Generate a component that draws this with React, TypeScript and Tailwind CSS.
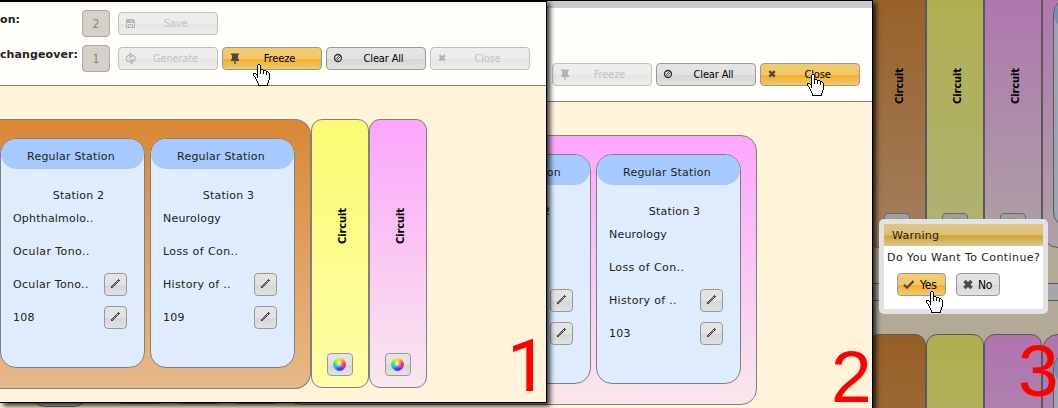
import React from 'react';

const verdana = "font-['DejaVu_Sans',sans-serif]";
const tahoma = "font-['DejaVu_Sans_Condensed','DejaVu_Sans',sans-serif] [font-stretch:condensed]";
const greyGlass = 'bg-[linear-gradient(#e4e4e4_0%,#e2e2e2_50%,#d6d6d6_52%,#e2e2e2_100%)]';
const goldGlass = 'bg-[linear-gradient(#f3cb70_0%,#f2c768_50%,#efb02a_54%,#f3c96c_100%)]';

type IconName = 'save' | 'refresh' | 'pin' | 'ban' | 'close' | 'check' | 'pencil' | 'bigClose';

function Icon({ name }: { name: IconName }) {
  const c = '#4a4a4a';
  return (
    <svg width="16" height="16" viewBox="0 0 16 16" className="block shrink-0" fill="none">
      {name === 'save' && (
        <g>
          <path d="M3.500 3.500h7l1 1v7h-8z" stroke={c} />
          <path d="M4 4h7v3H4z" fill={c} />
          <path d="M5.500 11.500v-3h4v3" stroke={c} />
          <path d="M8 4h1v2H8z" fill="#ddd" />
        </g>
      )}
      {name === 'refresh' && (
        <g stroke={c} strokeWidth="1.1">
          <path d="M7 4.5H5L3.5 6v3L5 10.5h1M9 4.5h1.5L12 6v3l-1.5 1.500H9" />
          <path d="M7 2.5v4l2.500-2zM9 8.500v4L6.500 10.500z" />
        </g>
      )}
      {name === 'pin' && (
        <path d="M4 2.500h8v1.500h-1v4h1v2H8.700v3H7.300v-3H4v-2h1V4H4z" fill={c} />
      )}
      {name === 'ban' && (
        <g stroke="#303030" strokeWidth="1.300">
          <circle cx="7" cy="7" r="3.500" />
          <path d="M4.300 8.700l4.300-4.300M5.500 9.600l4.200-4.200" strokeWidth=".8" />
        </g>
      )}
      {name === 'close' && <path d="M4.400 4.200l5.400 5.400M9.800 4.200l-5.400 5.400" stroke={c} strokeWidth="2.400" />}
      {name === 'bigClose' && <path d="M4.500 4l7 7M11.500 4l-7 7" stroke={c} strokeWidth="3.400" />}
      {name === 'check' && <path d="M3 7.700l3 3L12.500 4" stroke={c} strokeWidth="2.300" />}
      {name === 'pencil' && (
        <g shapeRendering="crispEdges" fill="#444">
          <path d="M3 10h2v1H3zM3 9h1v1H3zM4 8h1v1H4zM5 7h1v1H5zM6 6h1v1H6zM7 5h1v1H7zM5 9h1v1H5zM6 8h1v1H6zM7 7h1v1H7zM8 6h1v1H8z" />
          <path d="M8 4h1v1H8zM9 5h1v1H9zM9 3h3v1H9zM10 2h1v3h-1z" />
          <path d="M4 9h1v1H4zM5 8h1v1H5zM6 7h1v1H6zM7 6h1v1H7zM8 5h1v1H8z" fill="#999" />
        </g>
      )}
    </svg>
  );
}

function ToolButton({ icon, label, disabled, hot }: { icon: IconName; label: string; disabled?: boolean; hot?: boolean }) {
  return (
    <div
      className={`flex h-[23px] w-[100px] shrink-0 items-center rounded-[4px] border border-[#999] pl-1 ${hot ? goldGlass : greyGlass} ${disabled ? 'opacity-60' : ''}`}
    >
      <div className={disabled ? 'opacity-60' : ''}>
        <Icon name={icon} />
      </div>
      <span className={`flex-1 pr-[5px] text-center text-[11px] leading-[21px] tracking-[-0.15px] ${tahoma} ${disabled ? 'text-[#9a9a9a]' : 'text-black'}`}>{label}</span>
    </div>
  );
}

function NumberBox({ value }: { value: string }) {
  return (
    <div className={`flex h-[27px] w-7 shrink-0 items-center justify-center rounded-[4px] border border-[#aaa] bg-[#d5d0c8] text-[12px] text-[#858585] ${tahoma}`}>
      {value}
    </div>
  );
}

function EditButton() {
  return (
    <div className={`flex h-[23px] w-[23px] items-center rounded-[4px] border border-[#999] pl-[3px] ${greyGlass}`}>
      <Icon name="pencil" />
    </div>
  );
}

function Station({ title = 'Regular Station', name, rows }: { title?: string; name: string; rows: string[] }) {
  return (
    <div className={`h-[230px] w-[145px] shrink-0 overflow-hidden rounded-[16px] border border-[#808080] bg-[#dfebff] text-[11px] tracking-[0.2px] text-[#222] ${verdana}`}>
      <div className="h-[30px] rounded-[15px] bg-[#a6caff] pr-[3px] text-center leading-[35px]">{title}</div>
      <div className="mt-[18px] pl-[12px] text-center leading-[18px]">{name}</div>
      <div className="mt-[-1px] pr-[17px] pl-3">
        {rows.map((row, i) => (
          <div key={i} className="mt-[-3px] mb-[3px] flex h-[33px] items-center justify-between">
            <span className={`pt-px ${i === 1 ? 'tracking-[0.4px]' : i === 2 ? 'tracking-[0.32px]' : ''}`}>{row}</span>
            {i > 1 && <EditButton />}
          </div>
        ))}
      </div>
    </div>
  );
}

function ColorWheel() {
  return (
    <div className={`flex h-[23px] w-[26px] items-center justify-center rounded-[4px] border border-[#999] ${greyGlass}`}>
      <div className="mr-px h-[13px] w-[13px] rounded-full bg-[radial-gradient(circle,#ffffffbb_0%,#ffffff00_45%),conic-gradient(#ffe030,#ff9a30,#ff3050,#e020d0,#6020f0,#1a60e0,#20c0e0,#30e868,#b0f040,#ffe030)]" />
    </div>
  );
}

const tones = {
  orange: 'bg-[linear-gradient(#d98835,#e8b888)]',
  yellow: 'bg-[linear-gradient(#fbfb72,#fefea8)]',
  pink: 'bg-[linear-gradient(#fca6fc,#f8e8ec)]',
};

function Circuit({ tone, label }: { tone: keyof typeof tones; label?: string }) {
  return (
    <div className={`flex h-[269px] w-[58px] shrink-0 flex-col items-center rounded-[11px] border border-[#808080] ${tones[tone]}`}>
      <div className={`mt-[87px] ml-[6px] h-[38px] w-4 rotate-180 text-center text-[10px] leading-4 font-bold tracking-[-0.15px] text-black [writing-mode:vertical-rl] ${verdana}`}>
        {label}
      </div>
      <div className="mt-[108px] mr-px">
        <ColorWheel />
      </div>
    </div>
  );
}

const handRows = [
  '     XX          ',
  '    X..X         ',
  '    X..X         ',
  '    X..X         ',
  '    X..X         ',
  '    X..XXX       ',
  '    X..X..XXX    ',
  '    X..X..X..XX  ',
  '    X..X..X..X.X ',
  'XXX X..X..X..X..X',
  'X..XX........X..X',
  'X...X...........X',
  ' X..X...........X',
  '  X.X...........X',
  '  X.............X',
  '   X............X',
  '   X...........X ',
  '    X..........X ',
  '    X..........X ',
  '     X........X  ',
  '     X........X  ',
  '     XXXXXXXXXX  ',
];

function Hand({ className }: { className: string }) {
  return (
    <svg width="17" height="22" viewBox="0 0 17 22" shapeRendering="crispEdges" className={`absolute z-20 ${className}`}>
      {handRows.flatMap((row, y) =>
        row.split('').map((p, x) =>
          p === ' ' ? null : <rect key={`${x}-${y}`} x={x} y={y} width="1" height="1" fill={p === 'X' ? '#000' : '#fff'} />,
        ),
      )}
    </svg>
  );
}

function FirstWindow() {
  return (
    <section className="absolute top-0 left-0 h-[403px] w-[547px] overflow-hidden border-t-2 border-r border-b border-black bg-[#fff3d9] shadow-[3px_3px_5px_#000000cc]">
      <div className="flex h-[84px] flex-col border-b border-[#808080] bg-[#fffefa] pt-2">
        <div className="flex h-[35px] items-start">
          <div className={`w-[82px] pt-px text-[11px] leading-[18px] font-bold tracking-[0.1px] text-[#222] ${verdana}`}>on:</div>
          <NumberBox value="2" />
          <div className="ml-2 pt-[2px]"><ToolButton icon="save" label="Save" disabled /></div>
        </div>
        <div className="flex items-start">
          <div className={`w-[82px] pt-px text-[11px] leading-[18px] font-bold tracking-[0.1px] whitespace-nowrap text-[#222] ${verdana}`}>changeover:</div>
          <NumberBox value="1" />
          <div className="ml-2 flex gap-1 pt-[2px]">
            <ToolButton icon="refresh" label="Generate" disabled />
            <ToolButton icon="pin" label="Freeze" hot />
            <ToolButton icon="ban" label="Clear All" />
            <ToolButton icon="close" label="Close" disabled />
          </div>
        </div>
      </div>
      <div className="mt-[33px] flex">
        <div className={`flex h-[270px] w-[311px] gap-[5px] rounded-r-[16px] border-y border-r border-[#808080] pt-[18px] ${tones.orange}`}>
          <Station name="Station 2" rows={['Ophthalmolo..', 'Ocular Tono..', 'Ocular Tono..', '108']} />
          <Station name="Station 3" rows={['Neurology', 'Loss of Con..', 'History of ..', '109']} />
        </div>
        <Circuit tone="yellow" label="Circuit" />
        <Circuit tone="pink" label="Circuit" />
      </div>
      <div className="absolute top-[322px] left-[507px] font-['Roboto',sans-serif] text-[73px] leading-[84px] text-[#f00]">1</div>
    </section>
  );
}

function SecondWindow() {
  return (
    <section className="absolute top-0 left-0 h-[420px] w-[873px] overflow-hidden border-t border-r border-black bg-[#fff3d9] shadow-[3px_3px_5px_#000000cc]">
      <div className="h-[7px] bg-[#cbcacb]" />
      <div className="flex h-[94px] justify-end gap-1 border-b border-[#808080] bg-[#fffefa] pt-[55px] pr-3">
        <ToolButton icon="pin" label="Freeze" disabled />
        <ToolButton icon="ban" label="Clear All" />
        <ToolButton icon="close" label="Close" hot />
      </div>
      <div className="mt-[33px] flex pl-[31px]">
        <div className="mr-[23px] h-[272px] w-[57px] rounded-[14px] border border-[#70707c] bg-[#d8d8dc]" />
        <Circuit tone="orange" />
        <Circuit tone="yellow" />
        <Circuit tone="pink" />
        <div className={`flex h-[270px] w-[472px] justify-end gap-[5px] rounded-[16px] border border-[#808080] pt-[18px] pr-[15px] ${tones.pink}`}>
          <Station name="Station 2" rows={['Ophthalmolo..', 'Ocular Tono..', 'Ocular Tono..', '102']} />
          <Station name="Station 3" rows={['Neurology', 'Loss of Con..', 'History of ..', '103']} />
        </div>
      </div>
      <div className="absolute top-[334px] left-[831px] font-['Liberation_Sans',sans-serif] text-[73px] leading-[84px] text-[#f00]">2</div>
    </section>
  );
}

function CircuitRow({ label }: { label?: string }) {
  return (
    <div className="flex h-[269px]">
      <Circuit tone="orange" label={label} />
      <Circuit tone="yellow" label={label} />
      <Circuit tone="pink" label={label} />
      <div className={`h-[269px] w-[300px] shrink-0 rounded-[16px] border border-[#808080] pt-[18px] pl-[10px] ${tones.pink}`}>
        <Station title="" name="" rows={[]} />
      </div>
    </div>
  );
}

function ThirdWindow() {
  return (
    <section className="absolute top-0 left-[868px] h-[408px] w-[190px] overflow-hidden bg-[#fff3d9]">
      <div className="mt-[-21px]"><CircuitRow label="Circuit" /></div>
      <div className="mt-[35px] mb-[33px] h-[18px] border-y border-[#808080] bg-[#eeeeee]" />
      <CircuitRow />
      <div className="absolute inset-0 bg-black/30" />
    </section>
  );
}

function WarningDialog() {
  return (
    <div className="absolute top-[219px] left-[879px] z-10 h-[95px] w-[169px] rounded-[5px] border-[5px] border-[#e2e2e2] bg-white">
      <div className={`h-[22px] bg-[linear-gradient(#e0c685_0%,#dcc077_48%,#cfa335_54%,#dec282_95%,#c9c5b8_100%)] pl-2 text-[11px] leading-[23px] tracking-[0.3px] text-[#222] ${verdana}`}>Warning</div>
      <div className={`pt-px pl-[3px] text-[11px] leading-[22px] tracking-[0.42px] whitespace-nowrap text-[#222] ${verdana}`}>Do You Want To Continue?</div>
      <div className={`mt-[4px] ml-[13px] flex gap-[10px] text-[12px] tracking-[-0.2px] text-black ${tahoma}`}>
        <div className={`flex h-[23px] w-[49px] items-center gap-[3px] rounded-[4px] border border-[#999] pl-[3px] ${goldGlass}`}><Icon name="check" />Yes</div>
        <div className={`flex h-[23px] w-[44px] items-center gap-[2px] rounded-[4px] border border-[#999] pl-[3px] ${greyGlass}`}><Icon name="bigClose" />No</div>
      </div>
    </div>
  );
}

export default function App() {
  return (
    <main className="relative h-[408px] w-[1058px] overflow-hidden bg-[#fff3d9]">
      <ThirdWindow />
      <SecondWindow />
      <FirstWindow />
      <WarningDialog />
      <div className="absolute top-[329px] left-[1018px] z-10 font-['Liberation_Sans',sans-serif] text-[73px] leading-[84px] text-[#f00]">3</div>
      <Hand className="top-[64px] left-[253px]" />
      <Hand className="top-[74px] left-[807px]" />
      <Hand className="top-[291px] left-[926px]" />
    </main>
  );
}
